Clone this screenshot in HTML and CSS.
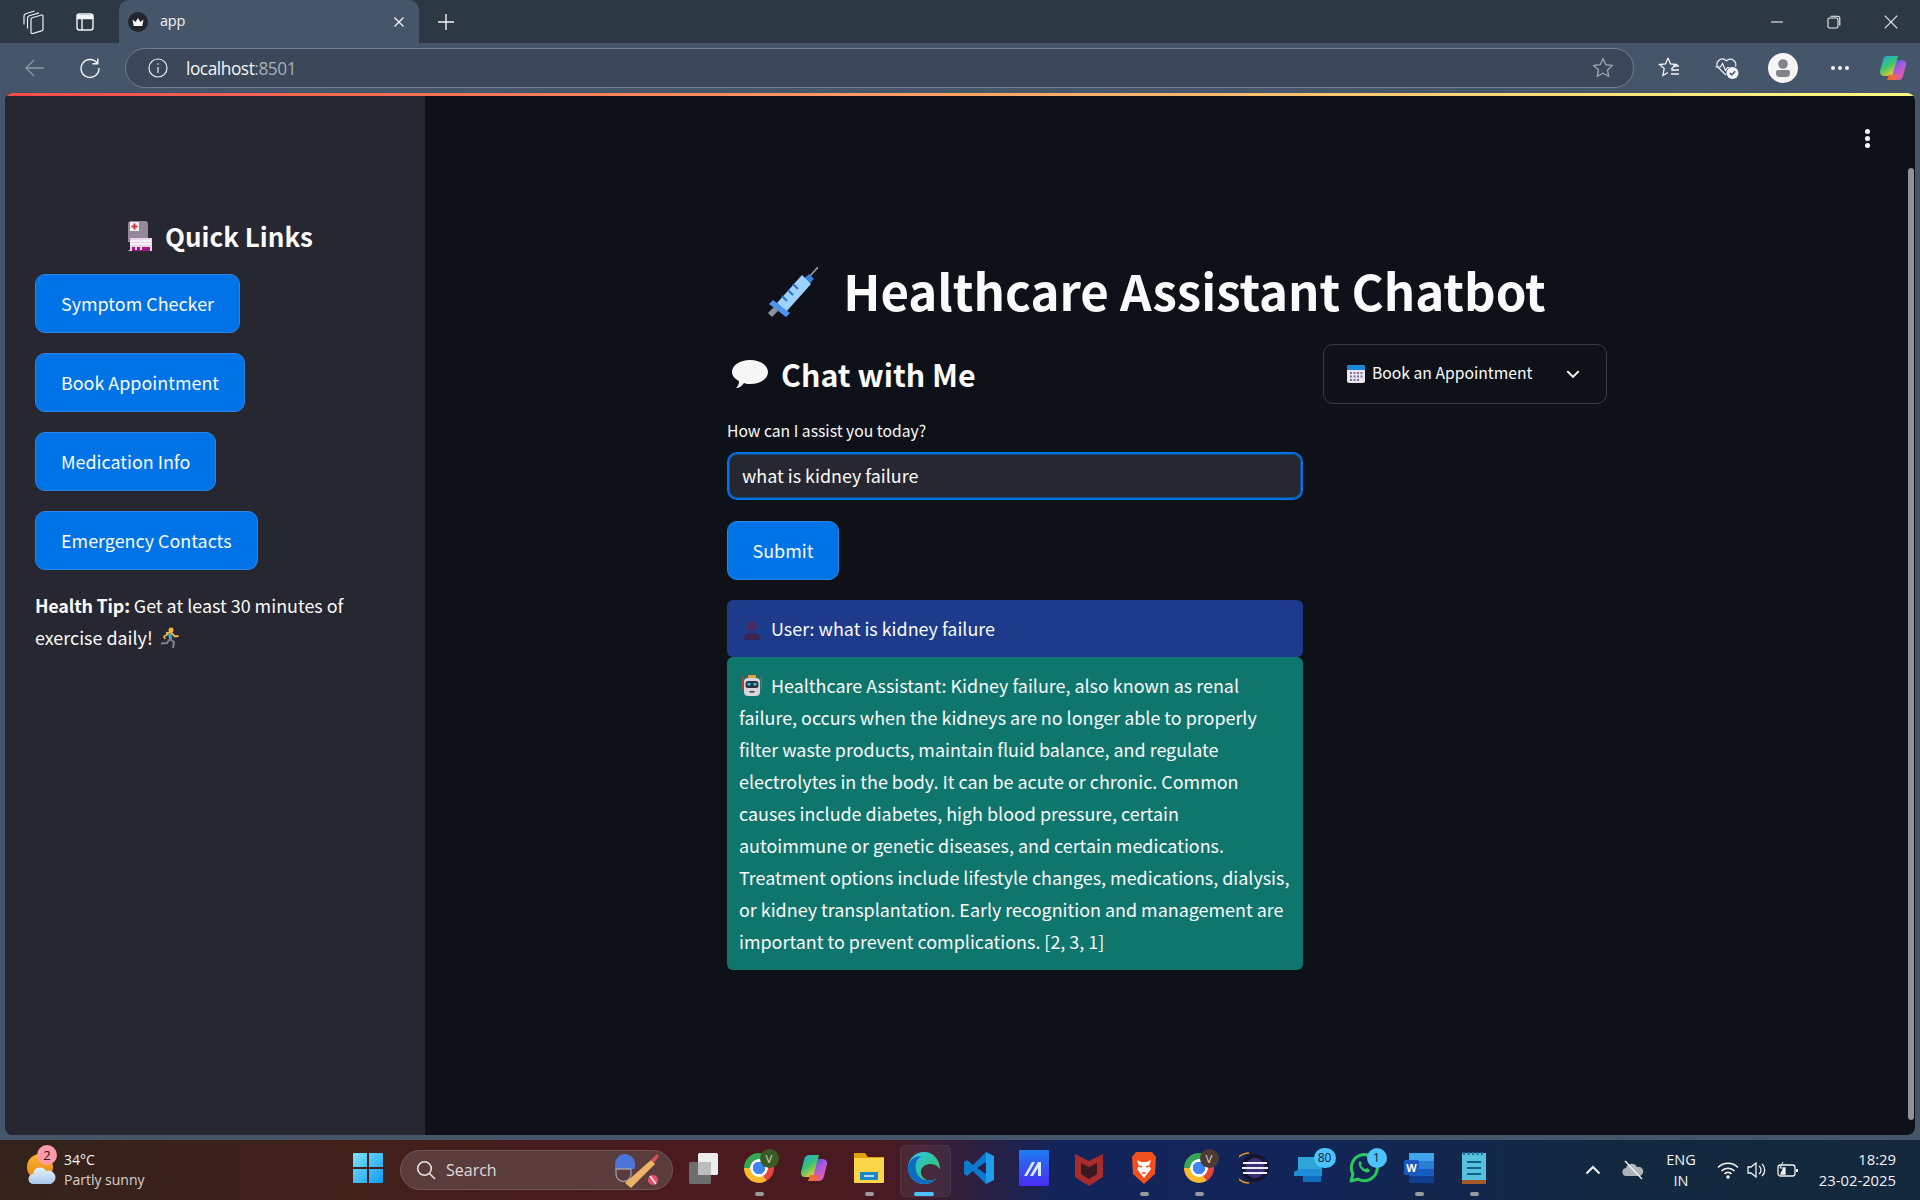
FILE: index.html
```html
<!DOCTYPE html>
<html lang="en">
<head>
<meta charset="utf-8">
<title>app</title>
<link rel="stylesheet" href="styles.css">
</head>
<body>
<div class="screen">
  <div class="tabbar">
    <span class="tb-icon tb-first"><svg width="24" height="24" viewBox="0 0 24 24" fill="none" stroke="#e8ecef" stroke-width="1.200"><path d="M10.500 8l10-3a1.200 1.200 0 0 1 1.500 1.200v13.300a1.200 1.200 0 0 1-.8 1.100l-9.500 3a1.200 1.200 0 0 1-1.700-1.200V9.300A1.400 1.400 0 0 1 10.500 8z"/><path d="M6.500 18.500V8a2.500 2.500 0 0 1 1.700-2.300L18 2.800"/><path d="M3 14.500V6a2.500 2.500 0 0 1 1.700-2.300L13.500 1"/></svg></span>
    <span class="tb-icon tb-second"><svg width="20" height="20" viewBox="0 0 20 20" fill="none" stroke="#f2f4f6" stroke-width="1.400"><rect x="2" y="2" width="16" height="16" rx="2.500"/><path d="M2.500 3.500h15v3h-15z" fill="#f2f4f6"/><path d="M7 6v12"/></svg></span>
    <div class="tab">
      <svg class="favicon" width="20" height="20" viewBox="0 0 20 20"><circle cx="10" cy="10" r="10" fill="#23252d"/><path d="M4.500 7.500l3 2.500L10 6l2.500 4 3-2.500-1.200 6.500H5.700z" fill="#f4f4f4"/></svg>
      <span class="tab-title">app</span>
      <svg class="tab-close" width="12" height="12" viewBox="0 0 12 12" stroke="#f2f4f6" stroke-width="1.300"><path d="M1.500 1.500l9 9M10.500 1.500l-9 9"/></svg>
    </div>
    <svg class="plus" width="18" height="18" viewBox="0 0 18 18" stroke="#f2f4f6" stroke-width="1.400"><path d="M9 1v16M1 9h16"/></svg>
    <div class="winctl">
      <svg width="14" height="14" viewBox="0 0 14 14" stroke="#eef1f3" stroke-width="1.100"><path d="M1 7h12"/></svg>
      <svg width="14" height="14" viewBox="0 0 14 14" fill="none" stroke="#eef1f3" stroke-width="1.100"><rect x="1" y="3" width="10" height="10" rx="1.500"/><path d="M3.500 1.200h7.300a2 2 0 0 1 2 2v7.300"/></svg>
      <svg width="14" height="14" viewBox="0 0 14 14" stroke="#eef1f3" stroke-width="1.100"><path d="M.7.700l12.600 12.600M13.300.700L.7 13.300"/></svg>
    </div>
  </div>

  <div class="toolbar">
    <svg class="back" width="20" height="20" viewBox="0 0 20 20" fill="none" stroke="#8c98a7" stroke-width="1.300"><path d="M1 10h18M9 2l-8 8 8 8"/></svg>
    <svg class="reload" width="22" height="22" viewBox="0 0 22 22" fill="none" stroke="#f2f4f6" stroke-width="1.400"><path d="M18.500 6.500A9 9 0 1 0 20 11"/><path d="M13.500 6.800h5.300V1.500"/></svg>
    <div class="address">
      <svg class="info" width="20" height="20" viewBox="0 0 20 20" fill="none" stroke="#eef1f3" stroke-width="1.200"><circle cx="10" cy="10" r="9"/><path d="M10 9v6M10 5.200v1.600"/></svg>
      <span class="url">localhost<span class="port">:8501</span></span>
      <svg class="star" width="22" height="22" viewBox="0 0 22 22" fill="none" stroke="#9aa3ad" stroke-width="1.400"><path d="M11 1.800l2.800 5.900 6.400.8-4.700 4.400 1.200 6.400-5.700-3.100-5.700 3.100 1.200-6.400L1.800 8.500l6.400-.8z"/></svg>
    </div>
    <div class="tools">
      <span class="tool"><svg width="24" height="24" viewBox="0 0 24 24" fill="none" stroke="#f2f4f6" stroke-width="1.300"><path d="M10 2l2.500 6 6 .5-4.700 4 .5 2.500M10 2L7.500 8l-6 .5 4.700 4-1.300 7 5-3"/><path d="M15 10h6M14 14h7M13 18h8"/></svg></span>
      <span class="tool"><svg width="26" height="24" viewBox="0 0 26 24" fill="none" stroke="#f2f4f6" stroke-width="1.200"><path d="M12 19L3.500 11A5.500 5.500 0 0 1 11.500 4l1 1 1-1a5.500 5.500 0 0 1 8 6.500"/><path d="M1.500 11h5l2-3.500 3 7 2-3h2"/><circle cx="18.500" cy="17" r="6" fill="#f2f4f6" stroke="none"/><path d="M15.800 17l2 2 3.300-3.800" stroke="#46566a" stroke-width="1.500"/></svg></span>
      <span class="tool"><svg width="30" height="30" viewBox="0 0 30 30"><circle cx="15" cy="15" r="15" fill="#f5f5f5"/><circle cx="15" cy="11" r="4.800" fill="#80848a"/><path d="M8 19a2 2 0 0 1 2-2h10a2 2 0 0 1 2 2v1a4 4 0 0 1-4 4h-6a4 4 0 0 1-4-4z" fill="#80848a"/></svg></span>
      <span class="tool dots"><i></i><i></i><i></i></span>
      <span class="tool tool-last"><svg width="30" height="30" viewBox="0 0 30 30"><defs><linearGradient id="cpa" x1="0" y1="0" x2=".6" y2="1"><stop offset="0" stop-color="#1fa2f5"/><stop offset=".55" stop-color="#38c66b"/><stop offset="1" stop-color="#f7c531"/></linearGradient><linearGradient id="cpb" x1="0" y1="0" x2=".6" y2="1"><stop offset="0" stop-color="#1f5fd8"/><stop offset=".5" stop-color="#a55ae0"/><stop offset="1" stop-color="#e85aa8"/></linearGradient></defs><path d="M20 27h-9l6-20h7a4 4 0 0 1 4 5l-3 11a5 5 0 0 1-5 4z" fill="url(#cpb)"/><path d="M10 3h10l-6 20H6a4 4 0 0 1-4-5l3-11a5 5 0 0 1 5-4z" fill="url(#cpa)"/><path d="M9 27l2-5h9l-2 5a2 2 0 0 1-2 0z" fill="#ef6b3a"/></svg></span>
    </div>
  </div>

  <div class="page">
    <div class="rainbow"></div>
    <div class="page-body">
      <aside class="sidebar">
        <h2 class="quick">
          <svg class="quick-ico" width="26" height="30" viewBox="0 0 26 30"><path d="M2 3a3 3 0 0 1 3-3h14a3 3 0 0 1 3 3v18H2z" fill="#94899a"/><rect x="4" y="1" width="9" height="9" fill="#f2eef0"/><path d="M7.500 2.500h2v2h2v2h-2v2h-2v-2h-2v-2h2z" fill="#d9304a"/><path d="M4 17h22v13H1l3-1z" fill="#ead5ea"/><rect x="4" y="19" width="21" height="2" fill="#f7eef7"/><rect x="4" y="22" width="21" height="2" fill="#f7eef7"/><rect x="6" y="26" width="18" height="4" fill="#a3187f"/><rect x="9" y="26" width="2" height="3" fill="#ead5ea"/><rect x="14" y="26" width="2" height="3" fill="#ead5ea"/></svg>
          <span>Quick Links</span>
        </h2>
        <div class="links">
          <button class="btn">Symptom Checker</button>
          <button class="btn">Book Appointment</button>
          <button class="btn">Medication Info</button>
          <button class="btn">Emergency Contacts</button>
        </div>
        <p class="tip"><strong>Health Tip:</strong> Get at least 30 minutes of exercise daily! <svg class="emoji" width="20" height="22" viewBox="0 0 20 22"><circle cx="11" cy="3" r="2.500" fill="#f5b83d"/><path d="M6 6l5-.5 4 4 3.500-.5" fill="none" stroke="#f5b83d" stroke-width="1.800"/><path d="M8 6.500l3.500 0 .8 6L9 12z" fill="#3aa6dd"/><path d="M9.500 12l4.500 3-1 6M9.500 12.500L7 16l-6 .5" fill="none" stroke="#7a8494" stroke-width="2"/><path d="M8 7L4 9.500 5 12" fill="none" stroke="#f5b83d" stroke-width="1.600"/></svg></p>
      </aside>

      <main class="main">
        <h1 class="title">
          <svg class="syringe" width="54" height="52" viewBox="0 0 54 52"><path d="M46 9L54 0" stroke="#9a9da3" stroke-width="1.500"/><path d="M36 15l9-8 5 5-9 9z" fill="#3d7fd6"/><path d="M38 8L13 36l9 9 25-28z" fill="#9fd3ff"/><path d="M29 17l5 5M24 23l5 5M18 29l5 5" stroke="#2f74cf" stroke-width="2.200"/><path d="M9 33l17 13-4 4L5 37z" fill="#4f94ef"/><path d="M4 46l6-6 4 4-6 6z" fill="#8a93a0"/></svg>
          <span>Healthcare Assistant Chatbot</span>
        </h1>
        <div class="cols">
          <section class="left">
            <h2 class="chat">
              <svg width="38" height="30" viewBox="0 0 38 30"><path d="M19 1c10 0 18 5 18 12s-8 12-18 12c-2 0-4 0-6-1-2 3-5 5-8 5 2-2 3-4 3-7-4-2-7-5-7-9C1 6 9 1 19 1z" fill="#f6f6f6"/></svg>
              <span>Chat with Me</span>
            </h2>
            <label class="field-label" for="q">How can I assist you today?</label>
            <input class="field" id="q" type="text" value="what is kidney failure">
            <button class="btn submit">Submit</button>
            <div class="msg msg-user"><svg class="emoji e-user" width="18" height="20" viewBox="0 0 18 20"><circle cx="9" cy="6" r="4.800" fill="#4a2a5c"/><path d="M1 20c0-5 3-7 8-7s8 2 8 7z" fill="#3d2350"/></svg> User: what is kidney failure</div>
            <div class="msg msg-bot"><svg class="emoji e-bot" width="20" height="22" viewBox="0 0 20 22"><rect x="6" y="0" width="8" height="3" fill="#f39c3c"/><rect x="2" y="3" width="16" height="18" rx="4" fill="#d8d5de"/><rect x="3.500" y="6" width="13" height="7" rx="2.500" fill="#2c3440"/><rect x="5.500" y="8" width="3" height="2.500" fill="#35c4ee"/><rect x="11.500" y="8" width="3" height="2.500" fill="#35c4ee"/><rect x="7.500" y="16" width="5" height="1.500" fill="#3c3f4b"/><path d="M.7 1v14M19.300 1v14" stroke="#d9483f" stroke-width="1"/></svg> Healthcare Assistant: Kidney failure, also known as renal failure, occurs when the kidneys are no longer able to properly filter waste products, maintain fluid balance, and regulate electrolytes in the body. It can be acute or chronic. Common causes include diabetes, high blood pressure, certain<br>autoimmune or genetic diseases, and certain medications. Treatment options include lifestyle changes, medications, dialysis, or kidney transplantation. Early recognition and management are important to prevent complications. [2, 3, 1]</div>
          </section>
          <aside class="right">
            <div class="expander">
              <svg class="cal" width="18" height="18" viewBox="0 0 18 18"><rect x="0" y="0" width="18" height="18" rx="2.500" fill="#ebe6f0"/><path d="M0 2.500A2.500 2.500 0 0 1 2.500 0h13A2.500 2.500 0 0 1 18 2.500V5H0z" fill="#1a86d8"/><g fill="#7d6f98"><rect x="3" y="7" width="2" height="2"/><rect x="6.500" y="7" width="2" height="2"/><rect x="10" y="7" width="2" height="2"/><rect x="13.500" y="7" width="2" height="2"/><rect x="3" y="10.500" width="2" height="2"/><rect x="6.500" y="10.500" width="2" height="2"/><rect x="10" y="10.500" width="2" height="2"/><rect x="13.500" y="10.500" width="2" height="2"/><rect x="3" y="14" width="2" height="2"/><rect x="6.500" y="14" width="2" height="2"/><rect x="10" y="14" width="2" height="2"/></g></svg>
              <span class="exp-text">Book an Appointment</span>
              <svg class="chev" width="16" height="16" viewBox="0 0 14 14" fill="none" stroke="#fafafa" stroke-width="1.700"><path d="M2 4.500L7 9.500l5-5"/></svg>
            </div>
          </aside>
        </div>
      </main>
    </div>
    <div class="kebab"><i></i><i></i><i></i></div>
    <div class="scrollthumb"></div>
  </div>

  <footer class="taskbar">
    <div class="weather">
      <span class="sun"><svg width="30" height="32" viewBox="0 0 30 32"><defs><linearGradient id="sn" x1="0" y1="0" x2="0" y2="1"><stop offset="0" stop-color="#f7b52b"/><stop offset="1" stop-color="#e8821e"/></linearGradient><linearGradient id="cl" x1="0" y1="0" x2="0" y2="1"><stop offset="0" stop-color="#e8f1fb"/><stop offset="1" stop-color="#a7c9ec"/></linearGradient></defs><circle cx="13" cy="13" r="13" fill="url(#sn)"/><path d="M7 30a5 5 0 0 1-1-10 7 7 0 0 1 13-3 6.500 6.500 0 0 1 5 13z" fill="url(#cl)"/></svg><span class="badge-red">2</span></span>
      <div class="w-text"><span>34°C</span><span class="w-sub">Partly sunny</span></div>
    </div>
    <span class="slot"><svg width="30" height="30" viewBox="0 0 30 30"><defs><linearGradient id="wn" x1="0" y1="0" x2="1" y2="1"><stop offset="0" stop-color="#7fe0f8"/><stop offset="1" stop-color="#0f9cf5"/></linearGradient></defs><path d="M0 1a1 1 0 0 1 1-1h13v14H0zM16 0h13a1 1 0 0 1 1 1v13H16zM0 16h14v14H1a1 1 0 0 1-1-1zM16 16h14v13a1 1 0 0 1-1 1H16z" fill="url(#wn)"/></svg></span>
    <div class="search">
      <svg width="20" height="20" viewBox="0 0 20 20" fill="none" stroke="#e8e4e2" stroke-width="1.600"><circle cx="8.500" cy="8.500" r="6.800"/><path d="M13.500 13.500l5.500 5.500"/></svg>
      <span class="search-text">Search</span>
      <svg class="cricket" width="50" height="38" viewBox="0 0 50 38"><path d="M4 14a10 10 0 0 1 20-2v6H4z" fill="#4c74d8"/><path d="M5 18h15v5a7.500 7.500 0 0 1-15 0z" fill="none" stroke="#9a9ea8" stroke-width="1.300"/><path d="M14 32L40 9l4 4-24 24z" fill="#ecb565"/><path d="M40 9l6-6 2 2-5 7z" fill="#d94f5a"/><circle cx="42" cy="29" r="5" fill="#e8506a"/><path d="M39 25l6 8" stroke="#fff" stroke-width="1.300"/></svg>
    </div>
    <div class="apps">
      <span class="slot"><svg width="32" height="32" viewBox="0 0 32 32"><rect x="10" y="1" width="20" height="22" rx="1.500" fill="#ececec"/><rect x="1" y="10" width="22" height="22" rx="1.500" fill="#6d6d6d"/><rect x="10" y="10" width="13" height="13" fill="#bcbcbc"/></svg></span>
      <span class="slot has-dot"><span class="chrome"></span><span class="badge-v green">V</span></span>
      <span class="slot"><svg width="30" height="30" viewBox="0 0 30 30"><path d="M20 28h-9l6-22h7a4 4 0 0 1 4 5l-3 12a6 6 0 0 1-5 5z" fill="url(#cpb)"/><path d="M10 2h10l-6 22H6a4 4 0 0 1-4-5l3-12a6 6 0 0 1 5-5z" fill="url(#cpa)"/><path d="M9 28l2-6h9l-2 6z" fill="#ef6b3a"/></svg></span>
      <span class="slot has-dot"><svg width="32" height="32" viewBox="0 0 32 32"><path d="M1 1h11l3 4h16v8H1z" fill="#e2a20f"/><path d="M1 6h30v24a1 1 0 0 1-1 1H2a1 1 0 0 1-1-1z" fill="#fbd54a"/><path d="M7 20h18v7a1 1 0 0 1-1 1H8a1 1 0 0 1-1-1z" fill="#1f86c7"/><rect x="11" y="23" width="10" height="2" fill="#a8dcf5"/></svg></span>
      <span class="slot has-dot active"><svg width="32" height="32" viewBox="0 0 32 32"><defs><linearGradient id="eg" x1="0" y1="0" x2="1" y2="1"><stop offset="0" stop-color="#35c1f1"/><stop offset=".6" stop-color="#2fc48c"/><stop offset="1" stop-color="#7fe05b"/></linearGradient></defs><path d="M16 0C7 0 0 7 0 16c0 9 7 16 16 16 5 0 9-2 12-5-6 3-14 1-15-6-1-5 4-9 9-9 4 0 9 2 10 6C32 7 25 0 16 0z" fill="url(#eg)"/><path d="M0 16C1 7 8 3 14 5c-6 1-7 7-6 13 1 7 8 13 20 9-3 3-7 5-12 5C7 32 0 25 0 16z" fill="#0c6cc4"/></svg></span>
      <span class="slot"><svg width="30" height="32" viewBox="0 0 30 32"><path d="M22 0l8 4v24l-8 4z" fill="#1f9cf0"/><path d="M22 0L9 13 3 8 0 10v12l3 2 6-5 13 13V22l-9-6 9-6z" fill="#0a7acb"/></svg></span>
      <span class="slot"><svg width="30" height="36" viewBox="0 0 30 36"><defs><linearGradient id="ma" x1="0" y1="0" x2="0" y2="1"><stop offset="0" stop-color="#1f7cf0"/><stop offset="1" stop-color="#4a2bf5"/></linearGradient></defs><rect width="30" height="36" fill="url(#ma)"/><path d="M5 26L13 12h3L8 26zM11 26l8-14h3v14h-3v-8l-5 8z" fill="#dbe9ff"/></svg></span>
      <span class="slot"><svg width="28" height="36" viewBox="0 0 28 36"><path d="M0 4l14 7 14-7v23L14 36 0 27z" fill="#a82c2c"/><path d="M6 13l8 4 8-4v11l-8 5-8-5z" fill="#3a1a20"/></svg></span>
      <span class="slot has-dot"><svg width="26" height="32" viewBox="0 0 26 32"><path d="M5 0h16l4 5-1 17-11 10L2 22 1 5z" fill="#f1501c"/><path d="M6 8l4 2h6l4-2-2 6 2 3-7 9-7-9 2-3z" fill="#fff"/><path d="M8 14l3 1M18 14l-3 1M11 21h4" stroke="#f1501c" stroke-width="1.500"/></svg></span>
      <span class="slot has-dot"><span class="chrome"></span><span class="badge-v brown">V</span></span>
      <span class="slot"><svg width="30" height="34" viewBox="0 0 30 34"><circle cx="16" cy="17" r="14" fill="#17152e"/><circle cx="16" cy="17" r="10" fill="#3c2e78"/><path d="M10 2A15 15 0 0 0 10 32" fill="none" stroke="#f2931e" stroke-width="1.500"/><path d="M4 12h24M3 17h26M4 22h24" stroke="#eeeef5" stroke-width="2"/></svg></span>
      <span class="slot"><svg width="30" height="32" viewBox="0 0 30 32"><rect x="4" y="5" width="24" height="14" fill="#2ea4d9"/><rect x="9" y="17" width="18" height="13" fill="#106ebe"/><path d="M0 20l6-3h22v7H0z" fill="#1d8fd8"/></svg><span class="badge-blue">80</span></span>
      <span class="slot"><svg width="32" height="32" viewBox="0 0 32 32" fill="none"><path d="M3 29l2-7A13 13 0 1 1 10 27z" stroke="#29c95b" stroke-width="3" stroke-linejoin="round"/><path d="M11 10c-1 3 1 6 3 8s5 3 7 2l1-2-3-2-2 1c-2-1-3-2-4-4l1-2-2-2z" fill="#29c95b"/></svg><span class="badge-blue one">1</span></span>
      <span class="slot has-dot"><svg width="30" height="32" viewBox="0 0 30 32"><rect x="5" y="1" width="25" height="30" rx="1" fill="#2b7cd3"/><rect x="5" y="1" width="25" height="8" fill="#41a5ee"/><rect x="5" y="17" width="25" height="7" fill="#185abd"/><rect x="5" y="24" width="25" height="7" fill="#103f91"/><rect x="0" y="8" width="15" height="15" rx="1.500" fill="#185abd"/><text class="word-w" x="7.500" y="20">W</text></svg></span>
      <span class="slot has-dot"><svg width="24" height="34" viewBox="0 0 24 34"><rect y="2" width="24" height="30" fill="#56c2de"/><rect y="29" width="24" height="4" fill="#a55a25"/><path d="M2 1v3M6.500 1v3M11 1v3M15.500 1v3M20 1v3" stroke="#1b6d91" stroke-width="2"/><path d="M5 11h14M5 17h14M5 23h14" stroke="#135f86" stroke-width="2.200"/></svg></span>
    </div>
    <div class="tray">
      <span class="t-slot t-chev"><svg width="16" height="10" viewBox="0 0 16 10" fill="none" stroke="#f2f2f2" stroke-width="2"><path d="M1.500 8.500L8 2l6.500 6.500"/></svg></span>
      <span class="t-slot t-cloud"><svg width="22" height="20" viewBox="0 0 22 20"><path d="M5 16a4 4 0 0 1-1-8 6 6 0 0 1 11-1 4.500 4.500 0 0 1 3 9z" fill="#aeb4ba"/><path d="M3 1l17 18" stroke="#f2f2f2" stroke-width="1.400"/></svg></span>
      <span class="t-slot t-lang"><span>ENG</span><span>IN</span></span>
      <span class="t-slot t-wifi"><svg width="22" height="18" viewBox="0 0 22 18" fill="none" stroke="#f2f2f2" stroke-width="1.600"><path d="M1 6.500a14 14 0 0 1 20 0M4.500 10a9 9 0 0 1 13 0M7.500 13a4.500 4.500 0 0 1 7 0"/><circle cx="11" cy="16" r="1" fill="#f2f2f2"/></svg></span>
      <span class="t-slot t-sound"><svg width="20" height="18" viewBox="0 0 20 18" fill="none" stroke="#f2f2f2" stroke-width="1.300"><path d="M1 6h3l5-4v14l-5-4H1z"/><path d="M12 5a5 5 0 0 1 0 8M15 3a8 8 0 0 1 0 12"/></svg></span>
      <span class="t-slot t-batt"><svg width="22" height="18" viewBox="0 0 22 18" fill="none" stroke="#f2f2f2" stroke-width="1.300"><rect x="1" y="4" width="17" height="11" rx="2.500"/><path d="M20 8v3" stroke-width="2"/><path d="M4 13l3-6h1v6z" fill="#f2f2f2"/><path d="M6 1L3 7h4L5 11" stroke-width="1"/></svg></span>
      <div class="clock"><span>18:29</span><span>23-02-2025</span></div>
    </div>
  </footer>
</div>
</body>
</html>
```
FILE: styles.css
```css
* { box-sizing: border-box; }
html, body { margin: 0; padding: 0; background: #46566a; }
svg { display: block; flex: none; }
.screen { width: 1920px; height: 1200px; display: flex; flex-direction: column; overflow: hidden; font-family: "Open Sans", "Noto Sans", sans-serif; }

/* tab strip */
.tabbar { height: 43px; background: #2d3845; display: flex; align-items: center; color: #f2f4f6; }
.tb-icon { display: flex; align-items: center; justify-content: center; }
.tb-first { width: 24px; margin-left: 21px; }
.tb-second { width: 20px; margin-left: 30px; }
.tab { width: 300px; height: 43px; margin-left: 24px; background: #46566a; border-radius: 10px 10px 0 0; display: flex; align-items: center; padding-left: 9px; }
.tab-title { font-size: 14.500px; margin-left: 12px; margin-top: -2px; letter-spacing: -.2px; }
.tab-close { margin-left: auto; margin-right: 14px; }
.plus { margin-left: 18px; }
.winctl { margin-left: auto; display: flex; align-items: center; gap: 43px; padding-right: 22px; }

/* toolbar */
.toolbar { height: 50px; background: #46566a; display: flex; align-items: center; }
.back { margin-left: 25px; }
.reload { margin-left: 34px; }
.address { width: 1509px; flex: none; height: 40px; margin-left: 24px; border: 1px solid #6f7c8c; border-radius: 20px; background: #3a4859; display: flex; align-items: center; padding-left: 22px; }
.url { margin-left: 18px; font-size: 17.300px; color: #f4f6f8; letter-spacing: -.45px; }
.port { color: #a7afb9; }
.star { margin-left: auto; margin-right: 19px; }
.tools { display: flex; flex: none; align-items: center; margin-left: 8px; }
.tool { display: flex; flex: none; align-items: center; justify-content: center; width: 56.500px; }
.tool-last { width: 50px; }
.dots { gap: 3px; }
.dots i { width: 4px; height: 4px; border-radius: 50%; background: #f2f4f6; }

/* page */
.page { position: relative; flex: 1; margin: 0 5px 5px; background: #0e1117; border-radius: 8px; overflow: hidden; display: flex; flex-direction: column; font-family: "Noto Sans CJK SC", "Source Sans Pro", sans-serif; color: #fafafa; }
.rainbow { height: 3px; flex: none; background: linear-gradient(90deg, #ff4b4b, #fffd80); }
.page-body { flex: 1; display: flex; min-height: 0; }
.sidebar { width: 420px; flex: none; background: #262730; padding: 121px 30px 0; }
.quick { margin: 0 0 17px; height: 40px; display: flex; align-items: center; justify-content: center; gap: 13px; font-size: 26px; font-weight: 600; line-height: 40px; padding: 0 0 2px 9px; }
.links { display: flex; flex-direction: column; align-items: flex-start; gap: 20px; }
.btn { height: 59px; padding: 0 25px 2px; background: #0073e6; border: 1px solid #2b84e6; border-radius: 10px; color: #fafafa; font-family: inherit; font-size: 17.920px; line-height: 30px; }
.tip { margin: 19px 0 0; font-size: 17.920px; line-height: 32px; }
.tip strong { font-weight: 700; letter-spacing: -.2px; }
.emoji { display: inline-block; vertical-align: -4px; margin-right: 2px; }
.tip .emoji { margin-left: 3px; }
.e-user { margin-left: 4px; margin-right: 6px; }
.e-bot { margin-left: 3px; margin-right: 5px; }

.main { flex: 1; padding: 161px 0 0 302px; }
.title { margin: 0; height: 70px; width: 880px; display: flex; align-items: center; justify-content: center; gap: 25px; padding: 0 24px 5px 0; font-size: 49.200px; line-height: 70px; font-weight: 700; }
.title .syringe { margin-top: 7px; }
.cols { display: flex; gap: 20px; width: 880px; }
.left { width: 576px; flex: none; padding-top: 23px; }
.chat { margin: 0; height: 50px; display: flex; align-items: center; gap: 12px; padding: 0 0 2px 4px; font-size: 30.400px; line-height: 50px; font-weight: 600; }
.field-label { display: block; margin-top: 20px; height: 24px; font-size: 15.700px; line-height: 22px; }
.field { display: block; width: 576px; height: 48px; margin-top: 8px; padding: 0 13px 2px; background: #262730; border: 2px solid #0073e6; border-radius: 10px; box-shadow: inset 0 0 0 1px rgba(0,115,230,.45); color: #fafafa; font-family: inherit; font-size: 17.920px; outline: none; }
.submit { display: block; width: 112px; padding: 0 0 2px; margin-top: 21px; }
.msg { font-size: 17.920px; line-height: 32px; padding: 12px 12px 13px; border-radius: 6px; }
.msg-user { margin-top: 20px; height: 57px; background: #1e3a8a; }
.msg-bot { background: #0f766e; padding: 12px 12px 13px; }

.right { width: 284px; flex: none; padding-top: 17px; }
.expander { height: 60px; border: 1px solid #3a3b42; border-radius: 10px; display: flex; align-items: center; padding: 0 0 1px 23px; }
.exp-text { margin-left: 7px; font-size: 15.700px; padding-bottom: 2px; }
.chev { margin-left: auto; margin-right: 25px; }

.kebab { position: absolute; right: 45px; top: 36px; display: flex; flex-direction: column; gap: 2px; }
.kebab i { width: 5px; height: 5px; border-radius: 50%; background: #fafafa; }
.scrollthumb { position: absolute; right: 1px; top: 75px; width: 6px; height: 952px; border-radius: 3px; background: #8f9196; }

/* taskbar */
.taskbar { height: 60px; flex: none; display: flex; align-items: center; background: linear-gradient(90deg, #33231a 0%, #41201a 18%, #4a1a1e 35%, #4a1a22 46%, #13245a 55%, #122558 68%, #13293f 85%, #13283c 100%); color: #f2f2f2; font-family: "Open Sans", "Noto Sans", sans-serif; }
.weather { width: 340px; flex: none; display: flex; align-items: center; padding-left: 27px; gap: 7px; }
.sun { position: relative; display: block; }
.badge-red { position: absolute; left: 10px; top: -9px; width: 20px; height: 20px; border-radius: 50%; background: #ff9aa8; color: #2a1a1a; font-size: 13px; line-height: 20px; text-align: center; }
.w-text { display: flex; flex-direction: column; font-size: 14px; line-height: 20px; }
.w-sub { color: #d8d4d0; }
.slot { position: relative; width: 55px; height: 60px; flex: none; display: flex; align-items: center; justify-content: center; padding-bottom: 4px; }
.search { width: 273px; height: 40px; margin-left: 5px; flex: none; border-radius: 20px; background: #5b3c3c; border: 1px solid #735657; display: flex; align-items: center; padding-left: 15px; }
.search-text { margin-left: 10px; font-size: 16px; color: #e0dcda; }
.cricket { margin-left: auto; margin-right: 11px; }
.apps { display: flex; margin-left: 3.500px; }
.has-dot::after { content: ""; position: absolute; left: 23px; top: 52px; width: 9px; height: 4px; border-radius: 2px; background: #9a9a9e; }
.active::before { content: ""; position: absolute; left: 3px; top: 5px; width: 49px; height: 50px; border-radius: 5px; background: rgba(255,255,255,.06); border: 1px solid rgba(255,255,255,.05); }
.active svg { position: relative; }
.active::after { left: 17px; width: 20px; background: #4cc2ff; }
.chrome { display: block; width: 30px; height: 30px; border-radius: 50%; background: radial-gradient(circle, #3f85f0 0 6px, #fff 6.500px 8.500px, transparent 9px), conic-gradient(from 30deg, #e8453c 0 120deg, #f9bb2d 120deg 240deg, #35a853 240deg 360deg); }
.badge-v { position: absolute; left: 28px; top: 9px; width: 19px; height: 19px; border-radius: 50%; color: #d8d8d8; font-size: 11.500px; line-height: 19px; text-align: center; }
.green { background: #3a5b22; }
.brown { background: #4e3a32; }
.badge-blue { position: absolute; left: 32px; top: 8px; width: 22px; height: 20px; border-radius: 10px; background: #4cc2ff; color: #10202c; font-size: 12px; line-height: 20px; text-align: center; }
.one { left: 30px; width: 20px; }
.word-w { font-family: "Liberation Sans", sans-serif; font-size: 11px; font-weight: 700; fill: #fff; text-anchor: middle; }
.tray { margin-left: auto; width: 347px; flex: none; display: flex; align-items: center; height: 60px; }
.t-slot { display: flex; align-items: center; justify-content: center; }
.t-chev { width: 40px; }
.t-cloud { width: 40px; }
.t-lang { width: 56px; flex-direction: column; font-size: 14.500px; line-height: 21px; }
.t-wifi { width: 37px; }
.t-sound { width: 22px; }
.t-batt { width: 40px; }
.clock { flex: 1; display: flex; flex-direction: column; align-items: flex-end; padding-right: 24px; font-size: 14.800px; line-height: 21px; }
```
